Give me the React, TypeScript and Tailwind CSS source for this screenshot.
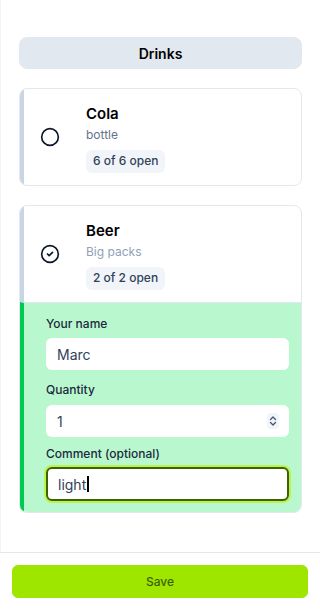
import { Circle, CircleCheck } from "lucide-react";

function Badge({ children }: { children: React.ReactNode }) {
  return (
    <span className="inline-flex h-[23px] items-center rounded-md bg-slate-100 px-[7px] text-[12px] font-medium text-slate-700">
      {children}
    </span>
  );
}

function ItemHeader({
  name,
  sub,
  open,
  checked,
  subClass,
}: {
  name: string;
  sub: string;
  open: string;
  checked?: boolean;
  subClass: string;
}) {
  return (
    <div className="flex h-[96px] items-center border-l-4 border-slate-300">
      <div className="flex w-[52px] justify-center text-slate-900">
        {checked ? <CircleCheck size={20} strokeWidth={2} /> : <Circle size={20} strokeWidth={2} />}
      </div>
      <div className="flex flex-col pl-[10px] pt-[3px]">
        <div className="text-[15px] leading-5 font-semibold text-black">{name}</div>
        <div className={`mt-[3px] text-[12px] leading-4 ${subClass}`}>{sub}</div>
        <div className="mt-[4px]">
          <Badge>{open}</Badge>
        </div>
      </div>
    </div>
  );
}

export default function App() {
  return (
    <div
      className="flex h-[610px] w-[320px] flex-col bg-white"
      style={{ fontFamily: "Inter, 'Noto Sans', sans-serif" }}
    >
      <div className="flex-1 overflow-hidden border-l border-slate-100 px-[18px] pt-[37px]">
        <div className="flex h-[32px] items-center justify-center rounded-lg border border-slate-200 bg-slate-200 text-[14px] font-semibold text-black">
          Drinks
        </div>

        <div className="mt-[19px] overflow-hidden rounded-lg border border-slate-200 bg-white">
          <ItemHeader name="Cola" sub="bottle" open="6 of 6 open" subClass="text-slate-500" />
        </div>

        <div className="mt-[19px] overflow-hidden rounded-lg border border-slate-200 bg-white">
          <ItemHeader
            name="Beer"
            sub="Big packs"
            open="2 of 2 open"
            checked
            subClass="text-slate-400"
          />
          <div className="flex flex-col border-t border-slate-200 border-l-4 border-l-green-500 bg-green-200 pb-[11px] pl-[22px] pr-[12px] pt-[13px]">
            <label className="text-[12px] leading-4 font-medium text-slate-800">Your name</label>
            <div className="mt-[6px] flex h-[32px] items-center rounded-md bg-white px-[11px] text-[14px] text-slate-700">
              Marc
            </div>
            <label className="mt-[12px] text-[12px] leading-4 font-medium text-slate-800">Quantity</label>
            <div className="mt-[7px] flex h-[32px] items-center justify-between rounded-md bg-white pl-[11px] pr-[10px] text-[14px] text-slate-700">
              <span>1</span>
              <span className="flex h-[16px] w-[12px] flex-col items-center justify-center rounded-sm bg-slate-100 text-slate-600">
                <svg width="8" height="12" viewBox="0 0 8 12" fill="none" stroke="currentColor" strokeWidth="1.3" strokeLinecap="round" strokeLinejoin="round">
                  <path d="M1.5 4.5 4 2l2.5 2.5" />
                  <path d="M1.5 7.5 4 10l2.5-2.5" />
                </svg>
              </span>
            </div>
            <label className="mt-[9px] text-[12px] leading-4 font-medium text-slate-800">Comment (optional)</label>
            <div className="mt-[5px] flex h-[34px] items-center rounded-md border-2 border-lime-800 bg-white px-[10px] text-[14px] text-slate-700 ring-2 ring-lime-300">
              <span>light</span>
              <span className="ml-[1px] h-[16px] w-[1.5px] bg-black" />
            </div>
          </div>
        </div>
      </div>

      <div className="border-t border-slate-200 px-[12px] pb-[12px] pt-[12px]">
        <button
          type="button"
          className="flex h-[33px] w-full items-center justify-center rounded-md border border-lime-400 bg-[#9ee600] text-[12px] font-medium text-lime-800"
        >
          Save
        </button>
      </div>
    </div>
  );
}
